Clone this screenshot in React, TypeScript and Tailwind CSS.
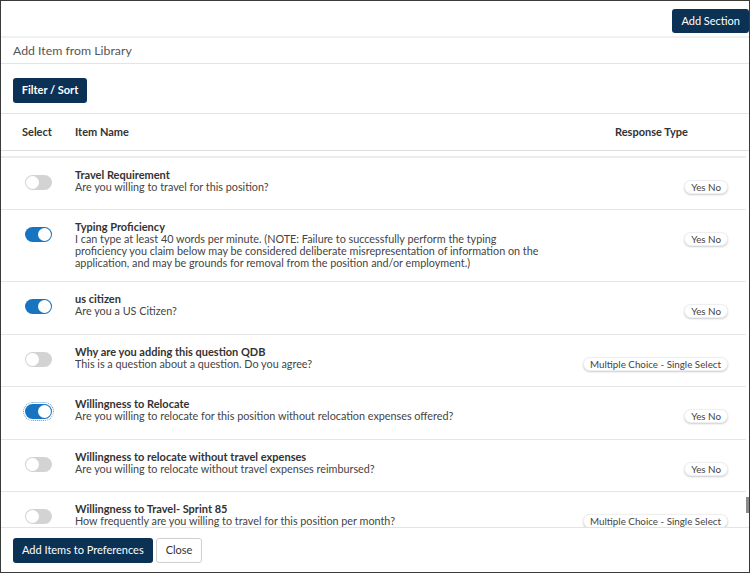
import React from 'react';

type Item = {
  title: string;
  lines: string[];
  on: boolean;
  response: string;
  focused?: boolean;
};

const items: Item[] = [
  {
    title: 'Travel Requirement',
    lines: ['Are you willing to travel for this position?'],
    on: false,
    response: 'Yes No',
  },
  {
    title: 'Typing Proficiency',
    lines: [
      'I can type at least 40 words per minute. (NOTE: Failure to successfully perform the typing',
      'proficiency you claim below may be considered deliberate misrepresentation of information on the',
      'application, and may be grounds for removal from the position and/or employment.)',
    ],
    on: true,
    response: 'Yes No',
  },
  {
    title: 'us citizen',
    lines: ['Are you a US Citizen?'],
    on: true,
    response: 'Yes No',
  },
  {
    title: 'Why are you adding this question QDB',
    lines: ['This is a question about a question. Do you agree?'],
    on: false,
    response: 'Multiple Choice - Single Select',
  },
  {
    title: 'Willingness to Relocate',
    lines: ['Are you willing to relocate for this position without relocation expenses offered?'],
    on: true,
    response: 'Yes No',
    focused: true,
  },
  {
    title: 'Willingness to relocate without travel expenses',
    lines: ['Are you willing to relocate without travel expenses reimbursed?'],
    on: false,
    response: 'Yes No',
  },
  {
    title: 'Willingness to Travel- Sprint 85',
    lines: ['How frequently are you willing to travel for this position per month?'],
    on: false,
    response: 'Multiple Choice - Single Select',
  },
];

function Toggle({ on, focused }: { on: boolean; focused?: boolean }) {
  return (
    <button
      className={
        'relative mt-[6px] h-[15px] w-[27px] shrink-0 rounded-full ' +
        (on ? 'bg-[#1674c0] ' : 'bg-[#d3d3d3] ') +
        (focused ? 'outline-1 outline-dotted outline-offset-1 outline-[#5b9bd5]' : '')
      }
    >
      <span
        className={
          'absolute top-[1px] h-[13px] w-[13px] rounded-full bg-white ' +
          (on ? 'right-[1px]' : 'left-[1px]')
        }
      />
    </button>
  );
}

export default function App() {
  return (
    <div className="flex h-[573px] w-[750px] flex-col overflow-hidden border border-[#3a3a3a] bg-white font-['Lato',sans-serif] text-[#333]">
      {/* Top bar */}
      <div className="flex h-[35px] shrink-0 items-start justify-end pt-[8px]">
        <button className="h-[24px] rounded-[3px] bg-[#0b3254] px-[9px] text-[11px] text-white">
          Add Section
        </button>
      </div>
      <div className="h-[2px] shrink-0 bg-[#f1f1f1]" />

      {/* Section title */}
      <div className="flex h-[26px] shrink-0 items-center border-b border-[#e4e4e4] px-[12px] pt-[2px] text-[12.3px] text-[#555]">
        Add Item from Library
      </div>

      {/* Filter */}
      <div className="shrink-0 border-b border-[#e4e4e4] px-[12px] pt-[12px] pb-[10px]">
        <button className="h-[25px] w-[74px] rounded-[3px] bg-[#0b3254] text-[11px] font-bold text-white">
          Filter / Sort
        </button>
      </div>

      {/* Table header */}
      <div className="flex h-[37px] shrink-0 items-center border-b border-[#dedede] pl-[21px] text-[11px] font-bold text-[#333]">
        <div className="w-[53px]">Select</div>
        <div className="flex-1">Item Name</div>
        <div className="w-[134px]">Response Type</div>
      </div>

      {/* List */}
      <div className="relative flex-1 overflow-hidden">
        <div className="mr-[3px] mt-[5px] h-[2px] bg-[#ececec]" />
        {items.map((it) => (
          <div
            key={it.title}
            className="mr-[3px] flex min-h-[52.5px] items-start border-b border-[#e6e6e6] pt-[11px] pb-[12px] pl-[24px] pr-[18px]"
          >
            <Toggle on={it.on} focused={it.focused} />
            <div className="ml-[23px] flex-1 leading-[12px]">
              <div className="text-[11px] font-bold text-[#333]">{it.title}</div>
              {it.lines.map((l) => (
                <div key={l} className="whitespace-nowrap text-[10.8px] text-[#444]">
                  {l}
                </div>
              ))}
            </div>
            <span className="mt-[11px] shrink-0 rounded-full border border-[#efefef] bg-white px-[6px] text-[9.8px] leading-[12px] text-[#444] shadow-[0_1px_2px_rgba(0,0,0,0.2)]">
              {it.response}
            </span>
          </div>
        ))}
        <div className="absolute right-0 top-[346px] h-[16px] w-[3px] bg-[#8a8a8a]" />
      </div>

      {/* Footer */}
      <div className="flex h-[45px] shrink-0 items-start gap-[3px] border-t border-[#e4e4e4] px-[12px] pt-[10px]">
        <button className="h-[25px] rounded-[3px] bg-[#0b3254] px-[9px] text-[11px] text-white">
          Add Items to Preferences
        </button>
        <button className="h-[25px] rounded-[3px] border border-[#cfcfcf] bg-white px-[9px] text-[11px] text-[#333]">
          Close
        </button>
      </div>
    </div>
  );
}
